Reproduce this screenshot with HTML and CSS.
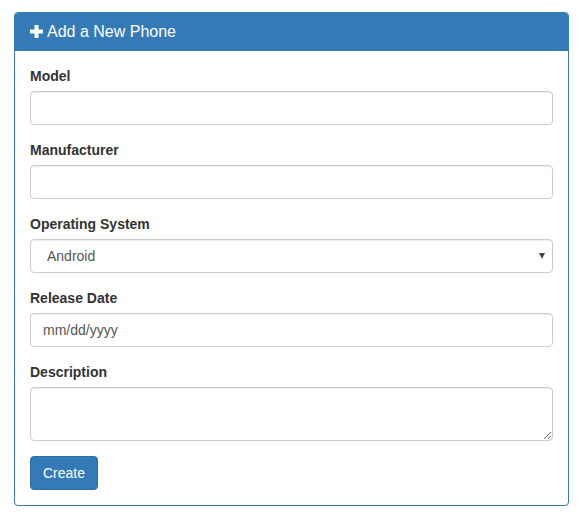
FILE: index.html
```html
<!DOCTYPE html>
<html>
<head>
<meta charset="utf-8">
<link rel="stylesheet" href="styles.css">
</head>
<body>
<div class="container">
  <div class="panel">
    <div class="panel-heading">
      <h3 class="panel-title"><svg class="plus" width="13" height="13" viewBox="0 0 13 13"><path d="M4.5 0h4v4.5H13v4H8.5V13h-4V8.5H0v-4h4.5z" fill="#fff"/></svg>Add a New Phone</h3>
    </div>
    <div class="panel-body">
      <form>
        <div class="form-group">
          <label>Model</label>
          <input class="form-control" type="text">
        </div>
        <div class="form-group">
          <label>Manufacturer</label>
          <input class="form-control" type="text">
        </div>
        <div class="form-group">
          <label>Operating System</label>
          <div class="select-wrap">
            <select class="form-control select">
              <option>Android</option>
              <option>iOS</option>
            </select>
            <span class="caret"></span>
          </div>
        </div>
        <div class="form-group">
          <label>Release Date</label>
          <input class="form-control date" type="text" placeholder="mm/dd/yyyy">
        </div>
        <div class="form-group">
          <label>Description</label>
          <textarea class="form-control textarea" rows="2"></textarea>
        </div>
        <button type="button" class="btn">Create</button>
      </form>
    </div>
  </div>
</div>
</body>
</html>
```
FILE: styles.css
```css
* { box-sizing: border-box; }
html, body { margin: 0; padding: 0; }
body {
  font-family: "Liberation Sans", Arial, sans-serif;
  font-size: 14px;
  line-height: 1.42857143;
  color: #333;
  background: #fff;
}
.container {
  padding: 12px 15px 0 14px;
}
.panel {
  border: 1px solid #337ab7;
  border-radius: 4px;
  background: #fff;
  box-shadow: 0 1px 1px rgba(0,0,0,.05);
}
.panel-heading {
  background: #337ab7;
  color: #fff;
  padding: 10px 15px;
  border-bottom: 1px solid #337ab7;
  border-radius: 3px 3px 0 0;
}
.panel-title {
  margin: 0;
  font-size: 16px;
  font-weight: normal;
  line-height: 17px;
  height: 17px;
  display: flex;
  align-items: center;
}
.plus { margin-right: 4px; margin-top: -1px; }
.panel-body { padding: 15px; }
form { margin: 0; }
.form-group { margin-bottom: 15px; }
label {
  display: block;
  font-weight: bold;
  margin-bottom: 5px;
}
.form-control {
  display: block;
  width: 100%;
  height: 34px;
  padding: 6px 12px;
  font-family: inherit;
  font-size: 14px;
  line-height: 1.42857143;
  color: #555;
  background: #fff;
  border: 1px solid #ccc;
  border-radius: 4px;
  box-shadow: inset 0 1px 1px rgba(0,0,0,.075);
  margin: 0;
}
.date::placeholder { color: #555; opacity: 1; }
.select-wrap { position: relative; }
.select {
  appearance: none;
  -webkit-appearance: none;
  padding-left: 16px;
}
.caret {
  position: absolute;
  right: 8px;
  top: 14px;
  width: 0;
  height: 0;
  border-left: 3.5px solid transparent;
  border-right: 3.5px solid transparent;
  border-top: 6px solid #444;
  pointer-events: none;
}
.textarea {
  height: 54px;
  resize: vertical;
}
.btn {
  display: inline-block;
  padding: 6px 12px;
  font-family: inherit;
  font-size: 14px;
  line-height: 1.42857143;
  color: #fff;
  background: #337ab7;
  border: 1px solid #2e6da4;
  border-radius: 4px;
  cursor: pointer;
}
```
